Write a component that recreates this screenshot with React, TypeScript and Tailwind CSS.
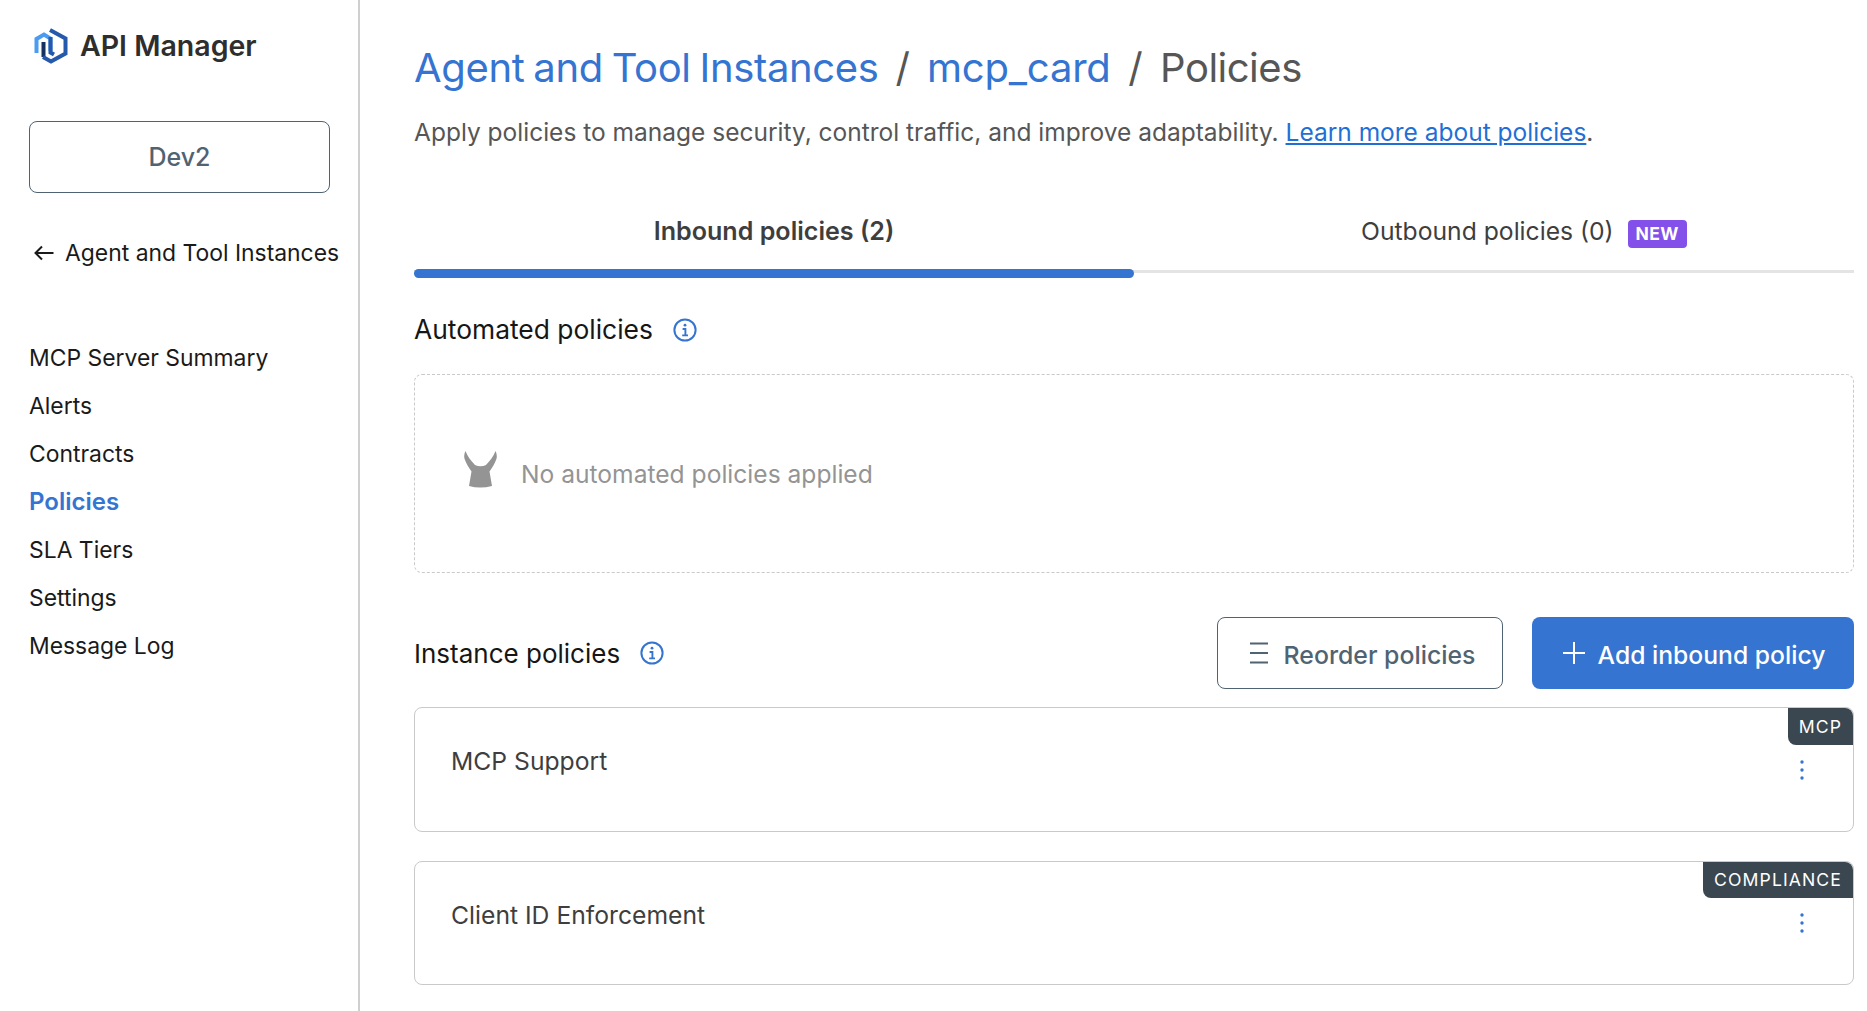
import React from "react";

function Logo() {
  return (
    <svg width="34" height="36" viewBox="0 0 34 36" fill="none" className="shrink-0">
      <path d="M2.500 25V11L10 6.500L16.500 10.500V23" stroke="#4b9bf2" strokeWidth="4" strokeLinejoin="miter" />
      <path d="M16.500 9V24.500L20 26.500" stroke="#2559ab" strokeWidth="4" />
      <path d="M9.500 14V29" stroke="#15315f" strokeWidth="4" />
      <path d="M16 2L31.500 10.500V25.500L17 33.500L9 29" stroke="#2559ab" strokeWidth="4" />
    </svg>
  );
}

function Info() {
  return (
    <svg width="24" height="24" viewBox="0 0 24 24" fill="none" className="shrink-0">
      <circle cx="12" cy="12" r="10.600" stroke="#3574d0" strokeWidth="2" />
      <circle cx="12" cy="7.200" r="1.400" fill="#3574d0" />
      <path d="M9.600 11H12.400V17.200M9.200 17.400H15" stroke="#3574d0" strokeWidth="1.900" />
    </svg>
  );
}

function Ears() {
  return (
    <svg width="33" height="37" viewBox="0 0 33 37" className="shrink-0 -mt-[9px]">
      <path
        d="M1.500 0C0 3 -0.300 6 1 9C2.500 13 5 17 7.500 20.500L5 35Q16 38 28 35L25.500 20.500C28 17 30.500 13 32 9C33.300 6 33 3 31.500 0C29.500 5 26.500 9.500 22 14Q16.500 16.500 11 14C6.500 9.500 3.500 5 1.500 0Z"
        fill="#949494"
      />
    </svg>
  );
}

function Kebab() {
  return (
    <svg width="4" height="20" viewBox="0 0 4 20" className="shrink-0">
      <circle cx="2" cy="2" r="1.700" fill="#3574d0" />
      <circle cx="2" cy="10" r="1.700" fill="#3574d0" />
      <circle cx="2" cy="18" r="1.700" fill="#3574d0" />
    </svg>
  );
}

const nav = ["MCP Server Summary", "Alerts", "Contracts", "Policies", "SLA Tiers", "Settings", "Message Log"];

function PolicyCard({
  title,
  tag,
  cardClass,
  kebabClass,
  tagClass,
}: {
  title: string;
  tag: string;
  cardClass: string;
  kebabClass: string;
  tagClass: string;
}) {
  return (
    <div className={`relative flex items-start justify-between rounded-lg border border-[#c9c9c9] pl-[36px] pr-[49px] ${cardClass}`}>
      <span className="mt-[37px] text-[24.7px] leading-8 text-[#3e3e3e]">{title}</span>
      <div className={`flex ${kebabClass}`}>
        <Kebab />
      </div>
      <span className={`absolute right-0 top-0 rounded-bl-lg rounded-tr-lg bg-[#3a4750] px-[11px] text-[17.6px] tracking-[1.1px] text-white ${tagClass}`}>
        {tag}
      </span>
    </div>
  );
}

export default function App() {
  return (
    <div className="flex h-[1011px] w-full overflow-hidden bg-white font-[Inter,sans-serif] text-[24px]">
      <aside className="flex w-[360px] shrink-0 flex-col border-r-2 border-[#cfcfcf] pl-[29px]">
        <div className="mt-[28px] flex h-[36px] items-center gap-[12px] pl-[5px]">
          <Logo />
          <span className="text-[28.5px] font-semibold text-[#2e2e2e]">API Manager</span>
        </div>
        <button className="mt-[57px] h-[72px] w-[301px] rounded-lg border border-[#506372] pt-[2px] text-[25px] font-medium text-[#506372]">
          Dev2
        </button>
        <div className="mt-[44px] flex h-8 items-center gap-[11px] pl-[5px] text-[22.9px] text-[#1a1a1a]">
          <svg width="20" height="16" viewBox="0 0 20 16" fill="none" className="shrink-0">
            <path d="M19.500 8H1.500M8 1.500L1.500 8L8 14.500" stroke="#1a1a1a" strokeWidth="2" />
          </svg>
          <span className="whitespace-nowrap">Agent and Tool Instances</span>
        </div>
        <nav className="mt-[65px] flex flex-col text-[22.9px]">
          {nav.map((n) => (
            <span
              key={n}
              className={`h-[48px] leading-[48px] ${n === "Policies" ? "text-[24px] font-semibold text-[#3574d0]" : "text-[#1a1a1a]"}`}
            >
              {n}
            </span>
          ))}
        </nav>
      </aside>

      <main className="min-w-0 flex-1 pl-[54px] pr-[13px]">
        <h1 className="mt-[44px] flex items-center whitespace-nowrap text-[40px] leading-[48px] text-[#565656]">
          <span className="tracking-[-0.35px] text-[#3574d0] [word-spacing:-2px]">Agent and Tool Instances</span>
          <span className="mx-[17px]">/</span>
          <span className="tracking-[-0.2px] text-[#3574d0]">mcp_card</span>
          <span className="mx-[17.5px]">/</span>
          <span className="tracking-[-0.5px]">Policies</span>
        </h1>
        <p className="mt-[24px] text-[24.5px] leading-8 text-[#565656]">
          Apply policies to manage security, control traffic, and improve adaptability.{" "}
          <a className="text-[#1f6fd6] underline">Learn more about policies</a>.
        </p>

        <div className="mt-[67px] flex h-[58px] border-b-[3px] border-[#e4e4e4]">
          <div className="relative flex h-[55px] w-[720px] justify-center text-[25.1px] font-semibold leading-8 text-[#3e3e3e]">
            Inbound policies (2)
            <div className="absolute -bottom-[8px] left-0 right-0 h-[9px] rounded-full bg-[#3574d0]" />
          </div>
          <div className="flex flex-1 items-start pl-[227px] text-[24.7px] leading-8 text-[#3e3e3e]">
            Outbound policies (0)
            <span className="ml-[14px] mt-[5px] flex h-[28px] w-[59px] items-center justify-center rounded bg-[#8350ea] text-[17.5px] font-bold leading-none tracking-[0.4px] text-white">
              NEW
            </span>
          </div>
        </div>

        <div className="mt-[41px] flex h-8 items-center gap-[20px] text-[26.4px] text-[#161616]">
          <span>Automated policies</span>
          <Info />
        </div>

        <div className="mt-[28px] flex h-[199px] items-center gap-[24px] rounded-lg border border-dashed border-[#c9c9c9] pl-[49px] text-[#949494]">
          <Ears />
          <span className="mt-[2px] text-[24.6px]">No automated policies applied</span>
        </div>

        <div className="mt-[44px] flex h-[72px] items-center gap-[20px] text-[26px] text-[#161616]">
          <span>Instance policies</span>
          <Info />
          <button className="ml-auto flex h-[72px] w-[286px] items-center justify-center gap-[15px] rounded-lg border border-[#506372] pl-[4px] text-[24.8px] font-medium text-[#506372]">
            <svg width="20" height="24" viewBox="0 0 20 24" fill="none" className="shrink-0">
              <path d="M1 2.500H19M1 12H19M1 21.500H19" stroke="#506372" strokeWidth="2" />
            </svg>
            <span className="mt-[6px]">Reorder policies</span>
          </button>
          <button className="ml-[9px] flex h-[72px] w-[322px] items-center justify-center gap-[13px] rounded-lg bg-[#3574d0] pl-[2px] text-[24.7px] font-medium text-white">
            <svg width="22" height="22" viewBox="0 0 22 22" fill="none" className="shrink-0">
              <path d="M11 0V22M0 11H22" stroke="#ffffff" strokeWidth="2" />
            </svg>
            <span className="mt-[6px]">Add inbound policy</span>
          </button>
        </div>

        <div className="mt-[18px] flex flex-col gap-[29px]">
          <PolicyCard title="MCP Support" tag="MCP" cardClass="h-[125px]" kebabClass="mt-[52px]" tagClass="pt-px leading-[36px]" />
          <PolicyCard title="Client ID Enforcement" tag="COMPLIANCE" cardClass="h-[124px]" kebabClass="mt-[51px]" tagClass="leading-[36px]" />
        </div>
      </main>
    </div>
  );
}
